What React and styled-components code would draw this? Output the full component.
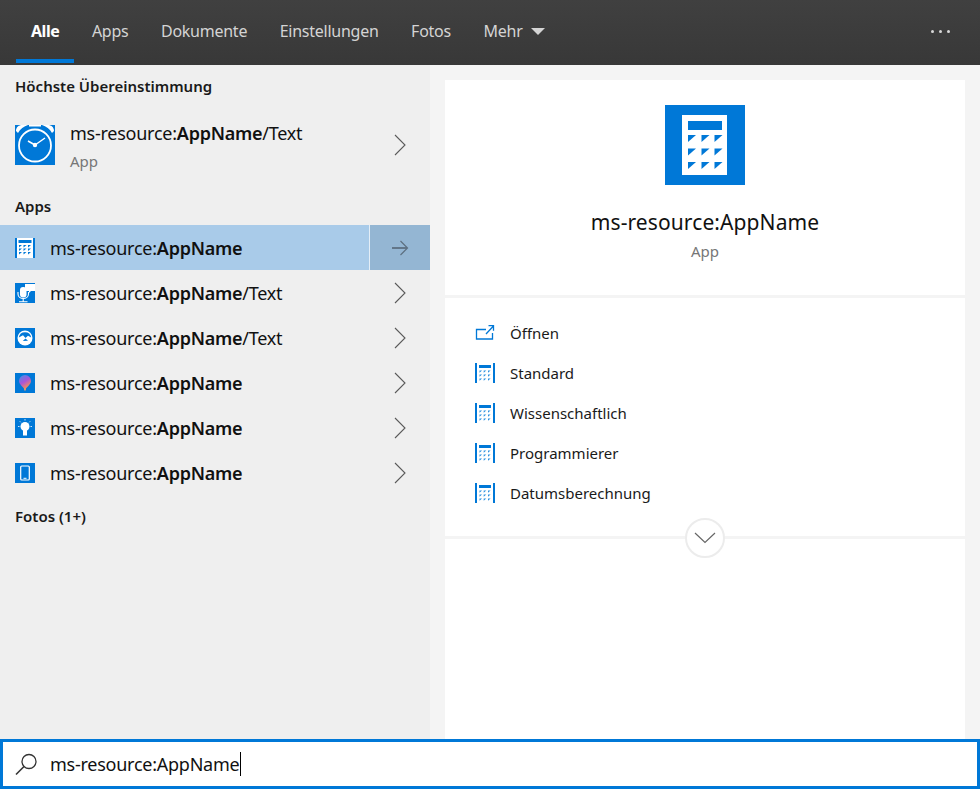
import React from 'react'
import styled, { createGlobalStyle } from 'styled-components'

const Global = createGlobalStyle`
  html, body { margin: 0; padding: 0; height: 100%; }
  body { font-family: "Noto Sans", "Open Sans", "Liberation Sans", sans-serif; color: #111; background: #f4f4f4; }
  * { box-sizing: border-box; }
`

const Page = styled.div`
  width: 980px;
  height: 789px;
  display: flex;
  flex-direction: column;
  overflow: hidden;
`

const TopBar = styled.nav`
  height: 65px;
  flex: none;
  display: flex;
  align-items: stretch;
  padding: 0 16px;
  background: linear-gradient(#404040, #383838);
`

const Tab = styled.div`
  display: flex;
  align-items: center;
  gap: 8px;
  padding: 3px 15px 0;
  margin-right: 2.5px;
  height: 63px;
  font-size: 16px;
  letter-spacing: ${p => (p.$active ? '-0.45px' : '-0.25px')};
  font-weight: ${p => (p.$active ? 700 : 400)};
  color: ${p => (p.$active ? '#fff' : '#d4d4d4')};
  border-bottom: 4px solid ${p => (p.$active ? '#0078d7' : 'transparent')};
`

const Caret = styled.span`
  width: 0;
  height: 0;
  margin-top: 1px;
  border-left: 7px solid transparent;
  border-right: 7px solid transparent;
  border-top: 7px solid #d4d4d4;
`

const MoreDots = styled.div`
  margin-left: auto;
  margin-right: 14px;
  display: flex;
  align-items: center;
  gap: 5px;
  padding-bottom: 2px;
`

const Dot = styled.span`
  width: 3px;
  height: 3px;
  border-radius: 50%;
  background: #d8d8d8;
`

const Body = styled.div`
  flex: 1;
  min-height: 0;
  display: flex;
`

const LeftPane = styled.section`
  width: 430px;
  flex: none;
  background: #efefef;
`

const RightPane = styled.section`
  flex: 1;
  padding: 15px 15px 0;
  background: #f4f4f4;
  display: flex;
`

const GroupTitle = styled.h2`
  margin: 0;
  height: 45px;
  padding: ${p => p.$top}px 15px 0;
  font-size: 15px;
  line-height: 20px;
  font-weight: 600;
  color: #1a1a1a;
`

const BestMatch = styled.div`
  height: 70px;
  display: flex;
  align-items: center;
  padding: 0 24px 0 15px;
  gap: 15px;
`

const BestText = styled.div`
  flex: 1;
  display: flex;
  flex-direction: column;
  gap: 7px;
  padding-top: 2px;
`

const Name = styled.div`
  font-size: 18px;
  line-height: 22px;
  letter-spacing: -0.25px;
  color: #111;
  b { font-weight: 600; }
`

const Sub = styled.div`
  font-size: 15px;
  line-height: 20px;
  color: #767676;
`

const Row = styled.div`
  height: 45px;
  display: flex;
  align-items: center;
  padding-left: 15px;
  gap: 15px;
  background: ${p => (p.$selected ? '#a9cbe9' : 'transparent')};
`

const RowLabel = styled.div`
  flex: 1;
  padding-top: 1px;
`

const RowAction = styled.div`
  width: 61px;
  height: 45px;
  flex: none;
  display: flex;
  align-items: center;
  justify-content: center;
  border-left: ${p => (p.$selected ? '1px solid #e4eef7' : '1px solid transparent')};
  background: ${p => (p.$selected ? '#94b6d3' : 'transparent')};
`

const Card = styled.div`
  flex: 1;
  background: #fff;
  display: flex;
  flex-direction: column;
`

const Hero = styled.div`
  height: 218px;
  flex: none;
  display: flex;
  flex-direction: column;
  align-items: center;
  padding-top: 25px;
  border-bottom: 3px solid #f4f4f4;
`

const HeroTitle = styled.div`
  margin-top: 22px;
  font-size: 21px;
  line-height: 30px;
  letter-spacing: 0.1px;
  color: #111;
`

const HeroSub = styled.div`
  margin-top: 4px;
  font-size: 15px;
  line-height: 20px;
  color: #767676;
`

const Actions = styled.div`
  position: relative;
  height: 241px;
  flex: none;
  padding: 15px 0 0 30px;
  border-bottom: 3px solid #f4f4f4;
`

const ActionRow = styled.div`
  height: 40px;
  display: flex;
  align-items: center;
  gap: 15px;
  font-size: 15px;
  color: #1a1a1a;
`

const ExpandButton = styled.div`
  position: absolute;
  left: 240px;
  bottom: -22px;
  width: 40px;
  height: 40px;
  border-radius: 50%;
  border: 2px solid #ececec;
  background: #fff;
  display: flex;
  align-items: center;
  justify-content: center;
`

const SearchBox = styled.div`
  height: 50px;
  flex: none;
  display: flex;
  align-items: center;
  gap: 12px;
  padding: 0 0 0 12px;
  border: 3px solid #0078d7;
  background: #fff;
  font-size: 18px;
  letter-spacing: -0.25px;
  color: #111;
`

const Cursor = styled.span`
  width: 1px;
  height: 24px;
  background: #000;
  margin-left: 1px;
`

const SearchText = styled.div`
  display: flex;
  align-items: center;
`

const Blue = '#0078d7'

const Chevron = () => (
  <svg width="12" height="22" viewBox="0 0 12 22" fill="none">
    <path d="M1 1l10 10L1 21" stroke="#5a5a5a" strokeWidth="1.1" />
  </svg>
)

const Arrow = () => (
  <svg width="18" height="16" viewBox="0 0 18 16" fill="none">
    <path d="M1 8h15" stroke="#5d6f80" strokeWidth="1.8" />
    <path d="M9.500 1l7 7-7 7" stroke="#5d6f80" strokeWidth="1.200" />
  </svg>
)

const Tile = ({ children }) => (
  <svg width="20" height="20" viewBox="0 0 20 20" style={{ flex: 'none', display: 'block' }}>
    <rect width="20" height="20" fill={Blue} />
    {children}
  </svg>
)

const CalcRow = () => (
  <svg width="20" height="20" viewBox="0 0 20 20" style={{ flex: 'none', display: 'block' }}>
    <rect x="0" y="0" width="20" height="20" fill={Blue} />
    <rect x="2" y="0" width="16" height="20" fill="#fff" />
    <rect x="3.500" y="2" width="13" height="3" fill={Blue} />
    {[7, 10.5, 14].flatMap(y => [4, 8.5, 13].map(x => (
      <path key={x + '-' + y} d={`M${x} ${y}h3l-3 2.600z`} fill={Blue} />
    )))}
  </svg>
)

const CalcLine = () => (
  <svg width="20" height="20" viewBox="0 0 20 20" style={{ flex: 'none', display: 'block' }}>
    <rect x="0" y="0" width="2" height="20" fill={Blue} />
    <rect x="18" y="0" width="2" height="20" fill={Blue} />
    <rect x="4" y="2" width="12" height="3" fill={Blue} />
    {[7.5, 11.5, 15.5].flatMap(y => [4.5, 8.7, 13].map(x => (
      <path key={x + '-' + y} d={`M${x} ${y}h2.600l-2.600 2.200z`} fill="#2a8fe0" />
    )))}
  </svg>
)

const OpenIcon = () => (
  <svg width="20" height="20" viewBox="0 0 20 20" fill="none" style={{ flex: 'none', display: 'block' }}>
    <path d="M11 6.500H1.500v9.500h16v-6" stroke={Blue} strokeWidth="1.300" />
    <path d="M11 11l7-7.500M13.500 2.700h5v5" stroke={Blue} strokeWidth="1.300" />
  </svg>
)

const HeroCalc = () => (
  <svg width="80" height="80" viewBox="0 0 80 80" style={{ flex: 'none', display: 'block' }}>
    <rect width="80" height="80" fill={Blue} />
    <rect x="17" y="10" width="45" height="60" fill="#fff" />
    <rect x="23" y="16" width="34" height="9" fill={Blue} />
    {[30, 43.5, 57].flatMap(y => [23, 36.500, 49.500].map(x => (
      <path key={x + '-' + y} d={`M${x} ${y}h8l-8 7z`} fill={Blue} />
    )))}
  </svg>
)

const icons = {
  mic: (
    <Tile>
      <path d="M10 1h10v7h-4l-2 2V8h-4z" fill="#fff" />
      <rect x="5" y="4" width="6.500" height="10.500" rx="3" fill="#fff" />
      <path d="M3 9v2c0 6 10.500 6 10.500 0V9" stroke="#fff" strokeWidth="1.100" fill="none" />
      <path d="M8.200 16v2.500M4 18.800h8.500" stroke="#fff" strokeWidth="1.100" />
    </Tile>
  ),
  photo: (
    <Tile>
      <circle cx="10" cy="10" r="7.500" fill="#fff" />
      <path d="M3.800 9.500a6.300 6.300 0 0 1 12.400 0l-3.200-1.800-2.500 2.300-2.500-2.800z" fill={Blue} />
      <path d="M7.800 13l2.700-2.500 2.500 2.300z" fill={Blue} />
    </Tile>
  ),
  paint: (
    <Tile>
      <defs>
        <linearGradient id="balloon" x1="0.200" y1="0" x2="0.700" y2="1">
          <stop offset="0" stopColor="#4f8be8" />
          <stop offset="0.450" stopColor="#a855d8" />
          <stop offset="0.850" stopColor="#f58a5a" />
        </linearGradient>
      </defs>
      <path d="M10 17C8.500 14 4 11.500 4 8a6 6 0 0 1 12 0c0 3.500-4.500 6-6 9z" fill="url(#balloon)" />
      <rect x="9.200" y="15.500" width="1.600" height="2" fill="#e8a070" />
    </Tile>
  ),
  bulb: (
    <Tile>
      <circle cx="10" cy="8.500" r="4.500" fill="#fff" />
      <rect x="8" y="12" width="4" height="5.500" fill="#fff" />
      <path d="M10 1v1.500M3 8.500h1.500M15.500 8.500H17M4.800 3.300l1 1M15.200 3.300l-1 1" stroke="#cfe4f7" strokeWidth="1" />
    </Tile>
  ),
  phone: (
    <Tile>
      <rect x="5.700" y="3" width="8.600" height="14" rx="1" fill="none" stroke="#fff" strokeWidth="1.200" />
      <path d="M8.500 15.300h3" stroke="#fff" strokeWidth="1" />
    </Tile>
  ),
}

const ClockIcon = () => (
  <svg width="40" height="40" viewBox="0 0 40 40" style={{ flex: 'none', display: 'block' }}>
    <rect width="40" height="40" fill={Blue} />
    <path d="M1 6C1 2 4 0 7 0h6c-4 1.500-8 4-10 8zM39 6c0-4-3-6-6-6h-6c4 1.500 8 4 10 8z" fill="#fff" />
    <rect x="14" y="0" width="12" height="1.500" fill="#fff" />
    <circle cx="20" cy="20.500" r="16" fill="none" stroke="#fff" strokeWidth="1.800" />
    <path d="M20 20l10-7M20 20l-7-4" stroke="#fff" strokeWidth="1.500" />
    <circle cx="20" cy="20" r="2.200" fill="#fff" />
  </svg>
)

const SearchIcon = () => (
  <svg width="23" height="23" viewBox="0 0 23 23" fill="none" style={{ flex: 'none' }}>
    <circle cx="14" cy="8.500" r="7" stroke="#333" strokeWidth="1.300" />
    <path d="M9 13.500L1 21.500" stroke="#333" strokeWidth="1.600" />
  </svg>
)

const AppLabel = ({ suffix }) => (
  <Name>
    ms-resource:<b>AppName</b>{suffix}
  </Name>
)

const appRows = [
  { icon: <CalcRow />, selected: true },
  { icon: icons.mic, suffix: '/Text' },
  { icon: icons.photo, suffix: '/Text' },
  { icon: icons.paint },
  { icon: icons.bulb },
  { icon: icons.phone },
]

const tabs = ['Apps', 'Dokumente', 'Einstellungen', 'Fotos']
const actions = ['Standard', 'Wissenschaftlich', 'Programmierer', 'Datumsberechnung']

export default function App() {
  return (
    <Page>
      <Global />
      <TopBar>
        <Tab $active>Alle</Tab>
        {tabs.map(t => <Tab key={t}>{t}</Tab>)}
        <Tab>Mehr <Caret /></Tab>
        <MoreDots><Dot /><Dot /><Dot /></MoreDots>
      </TopBar>
      <Body>
        <LeftPane>
          <GroupTitle $top={11}>Höchste Übereinstimmung</GroupTitle>
          <BestMatch>
            <ClockIcon />
            <BestText>
              <AppLabel suffix="/Text" />
              <Sub>App</Sub>
            </BestText>
            <Chevron />
          </BestMatch>
          <GroupTitle $top={16}>Apps</GroupTitle>
          {appRows.map((r, i) => (
            <Row key={i} $selected={r.selected}>
              {r.icon}
              <RowLabel><AppLabel suffix={r.suffix} /></RowLabel>
              <RowAction $selected={r.selected}>
                {r.selected ? <Arrow /> : <Chevron />}
              </RowAction>
            </Row>
          ))}
          <GroupTitle $top={11}>Fotos (1+)</GroupTitle>
        </LeftPane>
        <RightPane>
          <Card>
            <Hero>
              <HeroCalc />
              <HeroTitle>ms-resource:AppName</HeroTitle>
              <HeroSub>App</HeroSub>
            </Hero>
            <Actions>
              <ActionRow><OpenIcon />Öffnen</ActionRow>
              {actions.map(a => <ActionRow key={a}><CalcLine />{a}</ActionRow>)}
              <ExpandButton>
                <svg width="22" height="12" viewBox="0 0 22 12" fill="none">
                  <path d="M1 1l10 9.500L21 1" stroke="#666" strokeWidth="1.200" />
                </svg>
              </ExpandButton>
            </Actions>
          </Card>
        </RightPane>
      </Body>
      <SearchBox>
        <SearchIcon />
        <SearchText>ms-resource:AppName<Cursor /></SearchText>
      </SearchBox>
    </Page>
  )
}
